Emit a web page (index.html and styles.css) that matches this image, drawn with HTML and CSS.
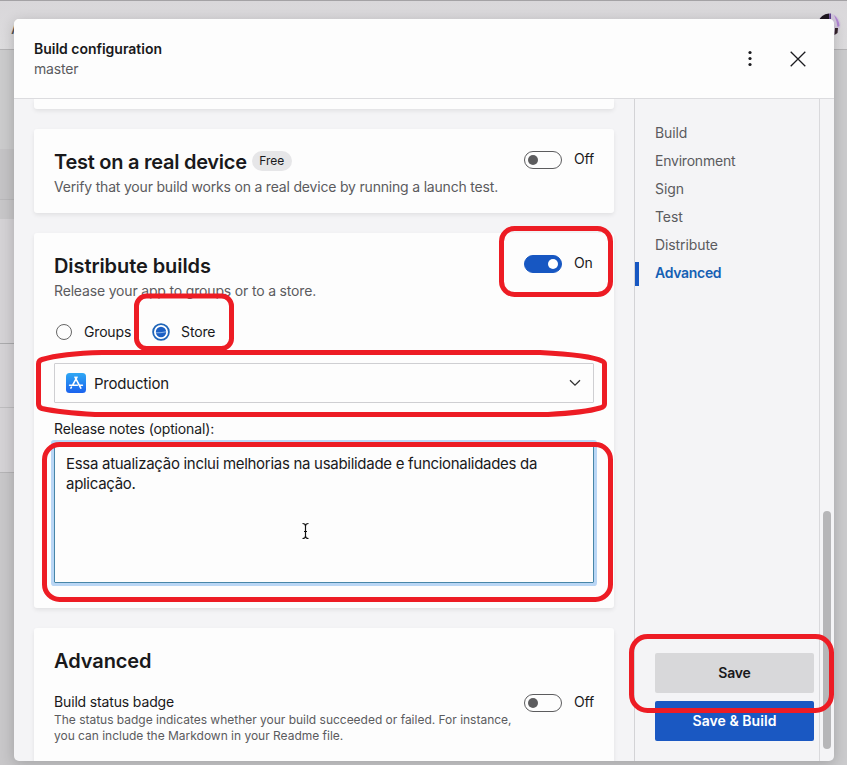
FILE: index.html
```
<!DOCTYPE html>
<html lang="en">
<head>
<meta charset="utf-8">
<title>Build configuration</title>
<link rel="stylesheet" href="styles.css">
</head>
<body>
<div class="page">
  <div class="page-bar">
    <span class="page-letter">A</span>
    <svg class="avatar" width="24" height="24" viewBox="0 0 24 24">
      <circle cx="12" cy="12" r="11.5" fill="#d3c9dc"/>
      <path d="M1 9 Q4 1 12 .5 L12 9Z" fill="#1d161e"/>
      <path d="M12.300 .5l1.700 0v9h-2z" fill="#5b3d8c"/>
      <path d="M17 2 Q22 6 22.500 13 L20.500 14Q20 8 17 2Z" fill="#b184d3"/>
      <path d="M18 15l3 0-.5 5-3 2z" fill="#33222a"/>
    </svg>
  </div>
  <div class="band band-a"></div>
  <div class="band band-b"></div>
  <div class="band band-c"></div>
  <div class="band band-d"></div>
  <div class="band band-e"></div>
  <div class="band band-f"></div>
  <div class="band band-g"></div>
</div>

<div class="modal">
  <header class="head">
    <div>
      <div class="head-title">Build configuration</div>
      <div class="head-sub">master</div>
    </div>
    <div class="head-actions">
      <svg width="6" height="18" viewBox="0 0 6 18" fill="#1b1b1f"><circle cx="3" cy="2.5" r="1.6"/><circle cx="3" cy="8.5" r="1.6"/><circle cx="3" cy="14.5" r="1.6"/></svg>
      <svg width="16" height="16" viewBox="0 0 16 16" fill="none" stroke="#1b1b1f" stroke-width="1.3"><path d="M.7.7l14.6 14.6M15.3.7L.7 15.3"/></svg>
    </div>
  </header>
  <div class="body">
    <main class="cards">
      <section class="card card-stub"></section>
      <section class="card card-test">
        <div class="row">
          <h2><span class="h-test">Test on a real device</span><span class="pill">Free</span></h2>
          <div class="switch"><i class="track"></i><span>Off</span></div>
        </div>
        <p class="desc desc-long">Verify that your build works on a real device by running a launch test.</p>
      </section>
      <section class="card card-dist">
        <div class="row">
          <h2>Distribute builds</h2>
          <div class="switch on"><i class="track"></i><span>On</span></div>
        </div>
        <p class="desc">Release your app to groups or to a store.</p>
        <div class="radios">
          <span class="radio"></span><span class="radio-label">Groups</span>
          <svg class="radio-on" width="18" height="18" viewBox="0 0 18 18"><circle cx="9" cy="9" r="7.9" fill="#fff" stroke="#1f65b8" stroke-width="1.8"/><circle cx="9" cy="9" r="5.2" fill="#1b5fc4"/><path d="M4 9.8q5 .2 10-1" stroke="#8db5ea" fill="none"/></svg><span class="radio-label">Store</span>
        </div>
        <div class="select">
          <svg width="20" height="20" viewBox="0 0 20 20">
            <defs><linearGradient id="store" x1="0" y1="0" x2="0" y2="1"><stop offset="0" stop-color="#2fa8f4"/><stop offset="1" stop-color="#1a62ee"/></linearGradient></defs>
            <rect width="20" height="20" rx="3.5" fill="url(#store)"/>
            <path d="M9 4.2l5.800 11M11 4.200L6.600 12.200M3.600 12.200h7.800M14 12.200h2.400M5.400 14.200l-.5.9" stroke="#fff" stroke-width="1.600" stroke-linecap="round" fill="none"/>
          </svg>
          <span class="select-text">Production</span>
          <svg width="12" height="8" viewBox="0 0 12 8" fill="none" stroke="#333" stroke-width="1.3"><path d="M1 1.2l5 5 5-5"/></svg>
        </div>
        <div class="label">Release notes (optional):</div>
        <div class="notes">Essa atualização inclui melhorias na usabilidade e funcionalidades da<br>aplicação.</div>
      </section>
      <section class="card card-adv">
        <h2>Advanced</h2>
        <div class="row badge-row">
          <div class="badge-title">Build status badge</div>
          <div class="switch"><i class="track"></i><span>Off</span></div>
        </div>
        <p class="small">The status badge indicates whether your build succeeded or failed. For instance,<br>you can include the Markdown in your Readme file.</p>
      </section>
    </main>
    <aside class="side">
      <nav>
        <a>Build</a><a class="env">Environment</a><a>Sign</a><a>Test</a><a>Distribute</a><a class="active">Advanced</a>
      </nav>
      <div class="buttons">
        <div class="btn">Save</div>
        <div class="btn primary">Save &amp; Build</div>
      </div>
    </aside>
    <div class="scroll"><div class="thumb"></div></div>
  </div>
</div>

<svg class="marks" width="847" height="765" viewBox="0 0 847 765" fill="none">
  <g stroke="#ed1c24" stroke-width="5">
    <rect x="501.500" y="228.500" width="109" height="66" rx="13"/>
    <rect x="136.500" y="296" width="95" height="52.500" rx="10"/>
    <path d="M102 352.500H540Q590 355 602 361Q604.500 362 604.500 364V404Q604.500 407 600 408Q585 412.500 548 414.500H95Q60 412.500 42 408.500Q38.500 407.500 38.500 404V364Q38.500 360.500 42 359.500Q62 353.500 102 352.500Z"/>
    <rect x="44.500" y="444.500" width="566" height="155" rx="15"/>
    <rect x="631.500" y="636.500" width="200" height="74" rx="16"/>
  </g>
  <path d="M302.500 523.500q3 0 3 2.500v11q0 2.500-3 2.500M308.500 523.500q-3 0-3 2.500v11q0 2.500 3 2.500M303.500 531.500h4" stroke="#fff" stroke-width="3"/>
  <path d="M302.500 523.500q3 0 3 2.500v10q0 2.500-3 2.500M308.500 523.500q-3 0-3 2.500v10q0 2.500 3 2.500M304 531.500h3" stroke="#111" stroke-width="1.200"/>
</svg>
</body>
</html>
```
FILE: styles.css
```
* { box-sizing: border-box; }

body {
  margin: 0;
  width: 847px;
  height: 765px;
  overflow: hidden;
  position: relative;
  font: 14px/20px Inter, "Liberation Sans", sans-serif;
  letter-spacing: -0.17px;
  color: #19191b;
}

h2, p { margin: 0; font-weight: 400; }

/* dimmed page behind the dialog */
.page { height: 765px; background: #cbcbcd; }
.page-bar {
  height: 50px;
  padding: 12px 6px 0 11px;
  display: flex;
  justify-content: space-between;
  border-top: 1px solid #a4a2a5;
  border-bottom: 1px solid #b4b3b5;
  background: linear-gradient(#d9d7da, #dddcde);
}
.page-letter { font-size: 18px; line-height: 30px; color: #555; }
.avatar { flex: none; }
.band { width: 20px; }
.band-a { height: 99px; background: #cbcbcc; }
.band-b { height: 51px; background: #c4c3c5; border-bottom: 1px solid #b9b8ba; }
.band-c { height: 19px; background: #c7c6c8; }
.band-d { height: 125px; background: #d4d2d5; border-bottom: 1px solid #ababad; }
.band-e { height: 64px; background: #d4d2d5; border-bottom: 1px solid #bebdbf; }
.band-f { height: 65px; background: #d4d2d5; border-bottom: 1px solid #b5b4b6; }
.band-g { height: 292px; background: #c8c7c9; }

/* dialog */
.modal {
  position: absolute;
  left: 14px;
  top: 19px;
  width: 820px;
  height: 742px;
  border-radius: 5px;
  overflow: hidden;
  display: flex;
  flex-direction: column;
  background: #f4f4f6;
  box-shadow: 0 3px 14px rgba(0, 0, 0, .2);
}
.head {
  flex: none;
  height: 80px;
  padding: 20px 28px 0 20px;
  display: flex;
  justify-content: space-between;
  align-items: flex-start;
  background: #fdfdfd;
  border-bottom: 1px solid #dcdcdf;
}
.head-title { font-weight: 600; letter-spacing: -0.02px; }
.head-sub { color: #5b5b5e; }
.head-actions { display: flex; align-items: center; gap: 37px; height: 40px; }

.body { flex: 1; min-height: 0; display: flex; }
.cards { width: 620px; padding: 0 20px; overflow: hidden; }
.card {
  background: #fdfdfd;
  border-radius: 3px;
  padding: 19px 20px 0;
  margin-bottom: 20px;
  box-shadow: 0 2px 4px rgba(0, 0, 0, .08);
}
.card-stub { height: 10px; padding: 0; border-radius: 0 0 3px 3px; }
.card-test { height: 84px; }
.card-dist { height: 375px; }
.card-adv { height: 200px; }

.row { display: flex; justify-content: space-between; align-items: flex-start; }
h2 {
  display: flex;
  align-items: center;
  font-size: 20px;
  line-height: 28px;
  font-weight: 600;
  letter-spacing: -0.08px;
}
.h-test { letter-spacing: -0.26px; }
.pill {
  margin: -2px 0 0 5px;
  padding: 0 7.5px;
  border-radius: 10px;
  font-size: 12px;
  line-height: 20px;
  font-weight: 400;
  letter-spacing: 0;
  background: #e6e6e8;
}
.desc { margin-top: 1px; color: #5b5b5e; }
.desc-long { letter-spacing: -0.19px; }

.switch { width: 70px; display: flex; align-items: center; gap: 12px; height: 24px; line-height: 22px; }
.switch span { margin-top: -2px; }
.track {
  flex: none;
  width: 38px;
  height: 18px;
  border: 1px solid #5c5c5e;
  border-radius: 9px;
  padding: 3px;
}
.track::before {
  content: "";
  display: block;
  width: 10px;
  height: 10px;
  border-radius: 50%;
  background: #5c5c5e;
}
.on .track { background: #1757c2; border-color: #1757c2; }
.on .track::before { background: #fff; margin-left: 20px; }

.radios { display: flex; align-items: center; margin-top: 21px; height: 20px; }
.radio { width: 16px; height: 16px; margin: 0 12px 0 2px; border: 1px solid #666; border-radius: 50%; }
.radio-on { margin: 0 11px 0 21px; }

.select {
  display: flex;
  align-items: center;
  margin-top: 21px;
  height: 40px;
  padding: 0 12px 0 11px;
  border: 1px solid #cfcfd2;
  border-radius: 1px;
}
.select-text { flex: 1; padding: 2px 0 0 8px; font-size: 15px; letter-spacing: -0.22px; }
.label { margin-top: 16px; letter-spacing: -0.14px; }
.notes {
  height: 140px;
  margin-top: 4px;
  padding: 10px 11px;
  font-size: 15px;
  letter-spacing: -0.29px;
  border: 1px solid #4886a8;
  box-shadow: 0 0 0 3px #b9d6f5;
  border-radius: 1px;
  white-space: nowrap;
}

.badge-row { height: 20px; margin-top: 17px; }
.badge-title { letter-spacing: -0.15px; }
.badge-row .switch { margin-top: -1px; }
.small { font-size: 12px; line-height: 16px; letter-spacing: -0.015px; color: #5b5b5e; white-space: nowrap; }

.side {
  width: 186px;
  border-left: 1px solid #d3d3d6;
  border-right: 1px solid #d9d9dc;
  padding: 20px 5px 20px 0;
  display: flex;
  flex-direction: column;
  justify-content: space-between;
}
nav { display: flex; flex-direction: column; }
nav a { height: 28px; line-height: 28px; padding-left: 20px; color: #5b5b5e; letter-spacing: -0.1px; }
nav .env { letter-spacing: -0.22px; }
nav .active {
  height: 24px;
  line-height: 22px;
  margin-top: 3px;
  padding-left: 16px;
  border-left: 4px solid #1757c2;
  font-weight: 600;
  letter-spacing: -0.3px;
  color: #1560b4;
}
.buttons { display: flex; flex-direction: column; gap: 8px; padding-left: 20px; }
.btn { height: 40px; line-height: 40px; border-radius: 2px; text-align: center; font-weight: 600; background: #d8d8da; }
.primary { background: #1a58c2; color: #fff; letter-spacing: 0.05px; }

.scroll { flex: 1; display: flex; justify-content: flex-end; align-items: flex-end; padding: 0 3px 12px; }
.thumb { width: 8px; height: 238px; border-radius: 4px; background: #b6b6b8; }

/* hand-drawn highlights and text cursor */
.marks { position: absolute; left: 0; top: 0; }
```
